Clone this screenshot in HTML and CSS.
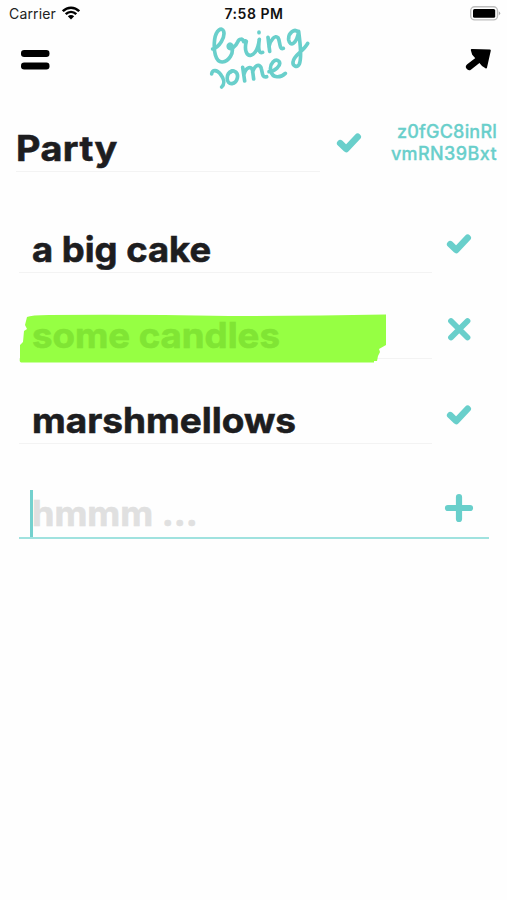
FILE: index.html
```html
<!DOCTYPE html>
<html lang="en">
<head>
<meta charset="utf-8">
<title>Bring Some</title>
<link rel="stylesheet" href="styles.css">
</head>
<body>
<svg width="0" height="0" class="defs">
  <symbol id="check" viewBox="0 0 26 22"><path d="M4.200 11.200l6 5.800L21.700 4.800" fill="none" stroke="currentColor" stroke-width="6.600" stroke-linecap="round" stroke-linejoin="round"/></symbol>
</svg>
<div class="status">
  <div class="carrier"><span>Carrier</span>
    <svg width="18" height="14" viewBox="0 0 18 14" fill="none" stroke="#000" stroke-width="2.5"><path d="M.8 5.2C5.500.5 12.5.5 17.200 5.200M3.700 8.100C6.800 5.200 11.200 5.200 14.300 8.100"/><path d="M9 13.500L5.800 10.300Q9 7.800 12.200 10.300z" fill="#000" stroke="none"/></svg>
  </div>
  <span class="time">7:58 PM</span>
  <svg class="battery" width="31" height="15" viewBox="0 0 31 15"><rect x=".7" y=".7" width="26.800" height="13.200" rx="4" fill="#fff" stroke="#bdbdbd" stroke-width="1.400"/><rect x="3" y="3" width="22.200" height="8.800" rx="1.500"/><path d="M28.800 5.200q2.800 2 0 4.200z" fill="#aaa"/></svg>
</div>
<header class="header">
  <svg class="menu" width="30" height="20" viewBox="0 0 30 20"><rect x="1" y="0" width="28.500" height="7" rx="3.200"/><rect x="1" y="12.500" width="28.500" height="7" rx="3.200"/></svg>
  <svg class="logo" width="102" height="64" viewBox="27 78 306 192" role="img" aria-label="bring some">
    <path d="M38 147C58 142 76 112 71 94C66 79 48 90 44 118C40 152 46 187 67 186C87 184 102 160 96 138C92 127 82 134 86 143C92 152 108 138 113 126C117 115 128 115 131 125Q137 120 139 124C132 150 140 169 153 166C168 161 175 143 178 118C174 145 176 162 188 157M177 96v2M204 112L209 154M207 140C212 118 226 104 234 113C241 123 237 150 250 145M296 98C284 83 264 98 266 120C270 141 290 134 296 94C300 130 307 170 298 192C292 204 275 199 280 182C284 164 311 153 323 130"/>
    <path d="M35 222C36 207 52 210 61 222C72 236 75 252 65 261M95 213C76 222 78 253 96 251C113 248 119 221 104 214Q98 211 92 216M128 202L134 243M132 223C138 200 156 196 158 214L161 237M158 216C164 194 181 190 184 206C188 220 186 234 200 230M207 215C222 215 246 197 237 184C226 174 208 190 212 212C217 237 243 233 256 220"/>
  </svg>
  <svg class="share" width="28" height="24" viewBox="0 0 28 24"><path d="M4.200 18.800L15 10.500" stroke="#000" stroke-width="6.500" stroke-linecap="round"/><path d="M6.800 2L24.800 2.500L21 19.500L18 17.500L8 6z" stroke="#000" stroke-width="2" stroke-linejoin="round"/></svg>
</header>
<main>
  <section class="title-row">
    <h1 class="title"><span class="w-party">Party</span></h1>
    <svg class="icon title-check"><use href="#check"/></svg>
    <p class="code"><span class="c1">z0fGC8inRl</span><br><span class="c2">vmRN39Bxt</span></p>
  </section>
  <ul class="list">
    <li class="item"><div class="name"><span class="w-cake">a big cake</span></div><svg class="icon"><use href="#check"/></svg></li>
    <li class="item"><div class="name done"><svg class="marker" width="368" height="50" viewBox="0 0 368 50"><path d="M8 3Q12 1 30 1Q110 0 210 2Q290 2 367 .5V31L360 35L361 38L359 42L358 47H355V48.500H2Q0 48 1 44V31L4 28L5 17L8 15L6 11z" fill="#96ff43"/></svg><span class="w-candles">some candles</span></div><svg class="icon" viewBox="0 0 26 22"><path d="M5 2L21.500 18.500M21.500 2L5 18.500" stroke="currentColor" stroke-width="5.800" stroke-linecap="round"/></svg></li>
    <li class="item"><div class="name"><span class="w-marsh">marshmellows</span></div><svg class="icon"><use href="#check"/></svg></li>
  </ul>
  <div class="new-item">
    <div class="caret"></div><span class="placeholder">hmmm ...</span>
    <svg class="plus" width="30" height="30" viewBox="0 0 30 30"><path d="M15 4v22M4 15h22" stroke="currentColor" stroke-width="6.200" stroke-linecap="round"/></svg>
  </div>
</main>
</body>
</html>
```
FILE: styles.css
```css
* { box-sizing: border-box; }
body { margin: 0; width: 507px; height: 900px; overflow: hidden; background: #fefefe; color: #1d1d1f; font-family: Inter, "Liberation Sans", sans-serif; }
.defs { position: absolute; }
.status { height: 26px; padding: 1px 6px 0 9px; display: grid; grid-template-columns: 1fr auto 1fr; align-items: center; font-size: 14px; line-height: 26px; }
.carrier { display: flex; align-items: center; gap: 6px; color: #222; letter-spacing: .15px; }
.carrier svg { margin-top: -2px; }
.time { font-weight: 600; color: #111; letter-spacing: .55px; margin-right: 2px; }
.battery { justify-self: end; margin-top: -2px; }
.header { height: 64px; padding: 0 14px 0 20px; display: grid; grid-template-columns: 1fr 102px 1fr; align-items: center; }
.menu { margin-top: 3px; }
.logo { margin-left: 3px; fill: none; stroke: #69cfcb; stroke-width: 11; stroke-linecap: round; stroke-linejoin: round; }
.share { justify-self: end; margin-top: 3px; }
.icon { display: block; width: 26px; height: 22px; color: #69cfcb; overflow: visible; }
.title-row { display: grid; grid-template-columns: 304px 26px 1fr; column-gap: 16px; height: 82px; padding: 0 10px 0 16px; }
.title { margin: 0; height: 82px; padding-top: 36px; border-bottom: 1px solid #f3f3f3; font-size: 35px; line-height: 44px; font-weight: 700; }
.title span, .name span, .placeholder { display: inline-block; white-space: pre; transform-origin: left; -webkit-text-stroke: .6px currentColor; }
.w-party { transform: scaleX(1.08); letter-spacing: .4px; }
.w-cake { transform: scaleX(1.04); }
.w-candles { transform: scaleX(1.045); }
.w-marsh { transform: scaleX(1.056); }
.title-check { margin-top: 42px; }
.code { margin: 31px 0 0; text-align: right; color: #69cfcb; font-size: 18px; line-height: 22px; font-weight: 500; white-space: nowrap; -webkit-text-stroke: .3px currentColor; }
.c1 { letter-spacing: .2px; }
.c2 { letter-spacing: .4px; }
.list { list-style: none; margin: 16px 0 0; padding: 0; }
.item { display: grid; grid-template-columns: 413px 26px; column-gap: 14px; padding-left: 19px; height: 85.3px; align-items: end; }
.name { position: relative; height: 46px; padding-left: 13px; border-bottom: 1px solid #f3f3f3; font-size: 35px; line-height: 44px; font-weight: 700; white-space: nowrap; }
.item .icon { margin-bottom: 18px; }
.marker { position: absolute; left: 0; top: 1px; }
.done span { position: relative; color: #80e534; }
.new-item { margin: 46px 0 0 19px; width: 470px; height: 49px; border-bottom: 2px solid #a0e2df; display: flex; align-items: center; padding: 0 15px 0 11px; }
.caret { width: 3px; height: 47px; background: #74d1ce; }
.placeholder { margin-right: auto; font-size: 35px; line-height: 44px; font-weight: 700; color: #e0e0e0; margin-left: -1px; transform: scaleX(1.03); }
.plus { color: #69cfcb; margin-top: -10px; }
```
